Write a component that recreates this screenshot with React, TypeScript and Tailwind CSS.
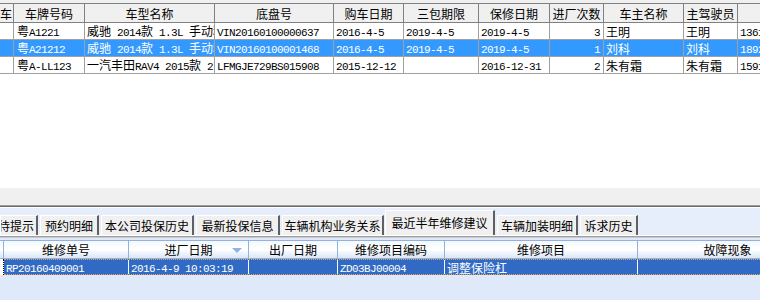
import React from "react";

const cjk = /[\u3000-\u9fff\uff00-\uffef]/;

function T({ s }: { s: string }) {
  const parts = s.split(/([\u3000-\u9fff\uff00-\uffef]+)/).filter((p) => p !== "");
  return (
    <span className="whitespace-pre">
      {parts.map((p, i) =>
        cjk.test(p) ? (
          <span key={i} className="font-['Noto_Sans_CJK_SC',sans-serif] text-[12px]">
            {p}
          </span>
        ) : (
          <span key={i} className="font-['Liberation_Mono',monospace] text-[11px] tracking-[-0.6px]">
            {p}
          </span>
        )
      )}
    </span>
  );
}

const topCols = [14, 71, 130, 119, 70, 75, 71, 54, 80, 54, 80];
const topHeads = ["车", "车牌号码", "车型名称", "底盘号", "购车日期", "三包期限", "保修日期", "进厂次数", "车主名称", "主驾驶员", ""];
const topRows = [
  ["", "粤A1221", "威驰 2014款 1.3L 手动精英版", "VIN20160100000637", "2016-4-5", "2019-4-5", "2019-4-5", "3", "王明", "王明", "13612345678"],
  ["", "粤A21212", "威驰 2014款 1.3L 手动精英版", "VIN20160100001468", "2016-4-5", "2019-4-5", "2019-4-5", "1", "刘科", "刘科", "18922223333"],
  ["", "粤A-LL123", "一汽丰田RAV4 2015款 2.0L", "LFMGJE729BS015908", "2015-12-12", "", "2016-12-31", "2", "朱有霜", "朱有霜", "15912345678"],
];

const tabs = [
  { t: "待提示", w: 38, ml: 0 },
  { t: "预约明细", w: 59, ml: 2 },
  { t: "本公司投保历史", w: 93, ml: 2 },
  { t: "最新投保信息", w: 84, ml: 2 },
  { t: "车辆机构业务关系", w: 102, ml: 2 },
  { t: "最近半年维修建议", w: 110, ml: 1, active: true },
  { t: "车辆加装明细", w: 81, ml: 2 },
  { t: "诉求历史", w: 58, ml: 2 },
];

const botCols = [125, 120, 89, 107, 193, 180];
const botHeads = ["维修单号", "进厂日期", "出厂日期", "维修项目编码", "维修项目", "故障现象"];
const botRow = ["RP20160409001", "2016-4-9 10:03:19", "", "ZD03BJ00004", "调整保险杠", ""];

export default function App() {
  return (
    <div className="w-[760px] h-[300px] overflow-hidden flex flex-col bg-white text-black">
      {/* upper grid */}
      <div className="h-[188px] bg-white overflow-hidden">
        <div className="h-[3px] bg-[#f0f0f0]" />
        <div className="flex h-[20px] bg-[#f0f0f0] border-t border-b border-[#808080]">
          {topHeads.map((h, i) => (
            <div
              key={i}
              style={{ width: topCols[i] }}
              className={`shrink-0 h-full border-r border-[#808080] flex items-center overflow-hidden whitespace-nowrap leading-[16px] ${i === 0 ? "justify-start" : "justify-center"}`}
            >
              <T s={h} />
            </div>
          ))}
        </div>
        {topRows.map((r, ri) => (
          <div
            key={ri}
            className={`flex h-[17px] border-b border-[#a0a0a0] ${ri === 1 ? "bg-[#3399ff] text-white" : "bg-white"}`}
          >
            {r.map((c, i) => (
              <div
                key={i}
                style={{ width: topCols[i] }}
                className={`shrink-0 h-full border-r border-[#a0a0a0] flex items-center overflow-hidden whitespace-nowrap leading-[16px] ${i === 7 ? "justify-end pr-[3px]" : i === 1 ? "pl-[3px]" : "pl-[2px]"}`}
              >
                <T s={c} />
              </div>
            ))}
          </div>
        ))}
      </div>

      {/* splitter */}
      <div className="h-[17px] bg-[#f0f0f0]" />
      <div className="h-[1px] bg-[#a0a0a0]" />
      <div className="h-[1px] bg-[#696969]" />

      {/* lower panel */}
      <div className="flex-1 bg-[#dfe9f9] flex flex-col">
        <div className="h-[1px] bg-white" />
        <div className="h-[27px] bg-[#e6eefb] flex items-end overflow-hidden">
          {tabs.map((tb, i) => (
            <div
              key={i}
              style={{ width: tb.w, marginLeft: tb.ml }}
              className={`shrink-0 bg-[#f0f0f0] border-l border-t border-white border-r-2 border-r-[#606060] flex justify-center overflow-hidden whitespace-nowrap leading-[16px] ${tb.active ? "h-[25px] pt-[3px] items-start" : "h-[20px] items-center"} ${i === 0 ? "justify-end pr-[2px]" : ""}`}
            >
              <T s={tb.t} />
            </div>
          ))}
        </div>
        <div className="h-[1px] bg-white" />
        <div className="h-[1px] bg-[#a0a0a0]" />
        <div className="h-[1px] bg-[#c8c8c8]" />
        <div className="h-[2px]" />

        {/* lower grid */}
        <div className="flex h-[19px] border-t border-b border-[#8db2e3] bg-gradient-to-b from-[#f4f8fe] via-[#ffffff] to-[#d9e7f9] overflow-hidden">
          <div className="w-[4px] shrink-0 border-r border-[#8db2e3]" />
          {botHeads.map((h, i) => (
            <div
              key={i}
              style={{ width: botCols[i] }}
              className="relative shrink-0 h-full border-r border-[#8db2e3] flex items-center justify-center whitespace-nowrap leading-[16px]"
            >
              <T s={h} />
              {i === 1 && (
                <svg className="absolute right-[6px] top-[7px]" width="10" height="5" viewBox="0 0 10 5">
                  <polygon points="0,0 10,0 5,5" fill="#8fb2e2" />
                </svg>
              )}
            </div>
          ))}
        </div>
        <div className="flex h-[16px] overflow-hidden">
          <div className="w-[4px] shrink-0 bg-white border-r border-dotted border-black" />
          <div className="flex flex-1 bg-[#316ac5] text-white border-t border-b border-dotted border-[#f0a040]">
            {botRow.map((c, i) => (
              <div
                key={i}
                style={{ width: botCols[i] }}
                className="shrink-0 h-full border-r border-white flex items-center pl-[2px] whitespace-nowrap overflow-hidden leading-[14px]"
              >
                <T s={c} />
              </div>
            ))}
          </div>
        </div>
      </div>
    </div>
  );
}
